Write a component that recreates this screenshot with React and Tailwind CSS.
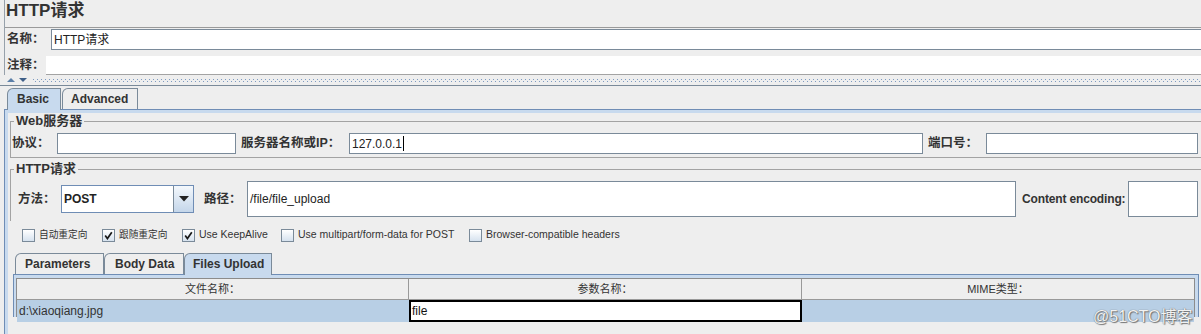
import clsx from "clsx";

function Input({ className, children }) {
  return (
    <div
      className={clsx(
        "flex items-center bg-white border border-[#7a8a99] pl-[2px] text-[12px] text-[#222] leading-none shrink-0",
        className
      )}
    >
      {children}
    </div>
  );
}

function Check({ checked }) {
  return (
    <span className="w-[13px] h-[13px] border border-[#7a8a99] bg-linear-to-b from-white to-[#d6e2ef] flex items-center justify-center shrink-0">
      {checked && (
        <svg width="9" height="9" viewBox="0 0 9 9">
          <path d="M1.2 4.6 L3.4 7.6 L7.8 1.2" stroke="#1a1a1a" strokeWidth="1.7" fill="none" />
        </svg>
      )}
    </span>
  );
}

function Tab({ label, active, className }) {
  return (
    <div
      className={clsx(
        "border border-b-0 border-[#7a8a99] rounded-tl-[6px] flex items-center text-[12px] font-bold text-[#333] shrink-0",
        active ? "bg-[#c8daee] relative z-10 h-[22px] -mb-px pb-px" : "bg-[#eeeeee] h-[21px]",
        className
      )}
    >
      {label}
    </div>
  );
}

const options = [
  { label: "自动重定向", checked: false, w: "w-[80px]", size: "text-[9.7px]" },
  { label: "跟随重定向", checked: true, w: "w-[80px]", size: "text-[9.7px]" },
  { label: "Use KeepAlive", checked: true, w: "w-[99px]", size: "text-[10.5px]" },
  { label: "Use multipart/form-data for POST", checked: false, w: "w-[188px]", size: "text-[10.5px]" },
  { label: "Browser-compatible headers", checked: false, w: "w-[200px]", size: "text-[10.5px]" },
];

export default function App() {
  return (
    <div className="w-[1201px] h-[334px] overflow-hidden relative bg-[#eeeeee] text-[#333] font-['Liberation_Sans','Noto_Sans_CJK_SC',sans-serif]">
      {/* header: title, name, comment */}
      <div className="ml-[4px] mr-[-8px] border-l border-[#97a1ab]">
        <div className="h-[27px] pl-[1px] text-[17px] font-bold leading-[22px]">HTTP请求</div>
        <div className="border-t border-[#9a9a9a] pt-px flex items-start">
          <div className="w-[46px] pl-[2px] h-[21px] flex items-center text-[12.5px] font-bold">名称：</div>
          <Input className="flex-1 h-[21px]">HTTP请求</Input>
        </div>
        <div className="pt-[6px] flex items-start">
          <div className="w-[41px] pl-[2px] h-[19px] flex items-center text-[12.5px] font-bold">注释：</div>
          <div className="flex-1 h-[19px] bg-white border-b border-[#a3a3a3]" />
        </div>
      </div>

      {/* split divider */}
      <div className="h-[11px] mr-[-8px] border-b border-[#7a8a99] flex items-start">
        <svg width="27" height="8" viewBox="0 0 27 8" className="mt-[2px] ml-[6px] shrink-0">
          <path d="M1 5 L5 1 L9 5 Z" fill="#5b7fa8" />
          <path d="M13 1 L21 1 L17 5 Z" fill="#3f5f88" />
        </svg>
        <svg height="4" className="flex-1 mt-[4px]">
          <defs>
            <pattern id="dots" width="4" height="4" patternUnits="userSpaceOnUse">
              <rect x="0" y="0" width="1" height="1" fill="#7d9ac0" />
              <rect x="2" y="2" width="1" height="1" fill="#7d9ac0" />
            </pattern>
          </defs>
          <rect width="100%" height="4" fill="url(#dots)" />
        </svg>
      </div>

      {/* main tabs */}
      <div className="pt-[2px] ml-[4px]">
        <div className="flex items-end pl-[3px]">
          <Tab label="Basic" active className="w-[54px] pl-[9px]" />
          <Tab label="Advanced" className="w-[76px] pl-[8px] ml-px" />
        </div>
        <div className="border-t border-l border-[#6f8db5] mr-[-8px]">
          <div className="border-t-[3px] border-l-[3px] border-[#c8daee] h-[230px]">
            {/* Web server group */}
            <fieldset className="min-w-0 ml-[2px] mr-[-10px] border border-[#a3a3a3] pb-[3px]">
              <legend className="ml-[3px] px-[2px] text-[13px] font-bold leading-[16px]">Web服务器</legend>
              <div className="mt-[4px] flex items-center h-[21px]">
                <div className="w-[46px] pl-px text-[12.5px] font-bold shrink-0">协议：</div>
                <Input className="w-[179px] h-[21px]" />
                <div className="w-[108px] ml-[5px] text-[12.5px] font-bold shrink-0">服务器名称或IP：</div>
                <Input className="w-[574px] h-[21px]">
                  127.0.0.1
                  <span className="w-px h-[15px] bg-black ml-px" />
                </Input>
                <div className="w-[58px] ml-[5px] text-[12.5px] font-bold shrink-0">端口号：</div>
                <Input className="w-[212px] h-[21px]" />
              </div>
            </fieldset>

            {/* HTTP request group */}
            <fieldset className="min-w-0 mt-[3px] ml-[2px] border-t border-l border-[#a3a3a3] pb-[4px]">
              <legend className="ml-[3px] px-[2px] text-[13px] font-bold leading-[16px]">HTTP请求</legend>
              <div className="mt-[4px] flex items-center h-[36px]">
                <div className="w-[50px] pl-[7px] text-[12.5px] font-bold shrink-0">方法：</div>
                <div className="w-[133px] h-[28px] border border-[#6f8db5] bg-white flex items-stretch shrink-0">
                  <div className="flex-1 flex items-center pl-[2px] text-[12px] font-bold text-[#222]">POST</div>
                  <div className="w-[20px] border-l border-[#7a8a99] bg-linear-to-b from-[#f4f8fc] to-[#c4d6ea] flex items-center justify-center">
                    <svg width="10" height="6" viewBox="0 0 10 6">
                      <path d="M0 0 L10 0 L5 5.5 Z" fill="#222" />
                    </svg>
                  </div>
                </div>
                <div className="w-[43px] ml-[10px] text-[12.5px] font-bold shrink-0">路径：</div>
                <Input className="w-[769px] h-[36px]">/file/file_upload</Input>
                <div className="w-[106px] ml-[6px] text-[12px] tracking-[-0.15px] font-bold shrink-0">Content encoding:</div>
                <Input className="w-[70px] h-[36px]" />
              </div>
            </fieldset>

            {/* options */}
            <div className="mt-[7px] h-[14px] flex items-center pl-[14px]">
              {options.map((o) => (
                <div key={o.label} className={clsx("flex items-center gap-[4px] shrink-0", o.w)}>
                  <Check checked={o.checked} />
                  <span className={clsx("text-[#333] whitespace-nowrap", o.size)}>{o.label}</span>
                </div>
              ))}
            </div>

            {/* inner tabs */}
            <div className="mt-[11px] flex items-end pl-[7px]">
              <Tab label="Parameters" className="w-[89px] pl-[9px]" />
              <Tab label="Body Data" className="w-[80px] pl-[10px]" />
              <Tab label="Files Upload" active className="w-[88px] pl-[8px]" />
            </div>
            <div className="ml-[5px] mr-[10px] border-t border-l border-r border-[#6f8db5]">
              <div className="border-t-[3px] border-l-[2px] border-r-[3px] border-[#c8daee]">
                <div className="border-l border-t border-r border-[#8c8c8c]">
                  <div className="grid grid-cols-[392px_393px_1fr] h-[21px] border-b border-[#999] text-[11px] text-[#333]">
                    <div className="flex items-center justify-center border-r border-[#999]">文件名称：</div>
                    <div className="flex items-center justify-center border-r border-[#999]">参数名称：</div>
                    <div className="flex items-center justify-center">MIME类型：</div>
                  </div>
                  <div className="grid grid-cols-[392px_393px_1fr] h-[17px] border-b border-[#8c8c8c] text-[12px]">
                    <div className="bg-[#b8cfe5] flex items-center pl-[2px] text-[#333]">d:\xiaoqiang.jpg</div>
                    <div className="bg-white border-2 border-black flex items-center pl-px text-[#111]">file</div>
                    <div className="bg-[#b8cfe5]" />
                  </div>
                </div>
              </div>
            </div>
          </div>
        </div>
      </div>

      <div className="absolute left-[1093px] top-[307px] text-[16px] leading-[20px] text-[#f2f2f2] [text-shadow:0_0_1px_#555,1px_1px_1px_#777] whitespace-nowrap">
        @51CTO博客
      </div>
    </div>
  );
}
